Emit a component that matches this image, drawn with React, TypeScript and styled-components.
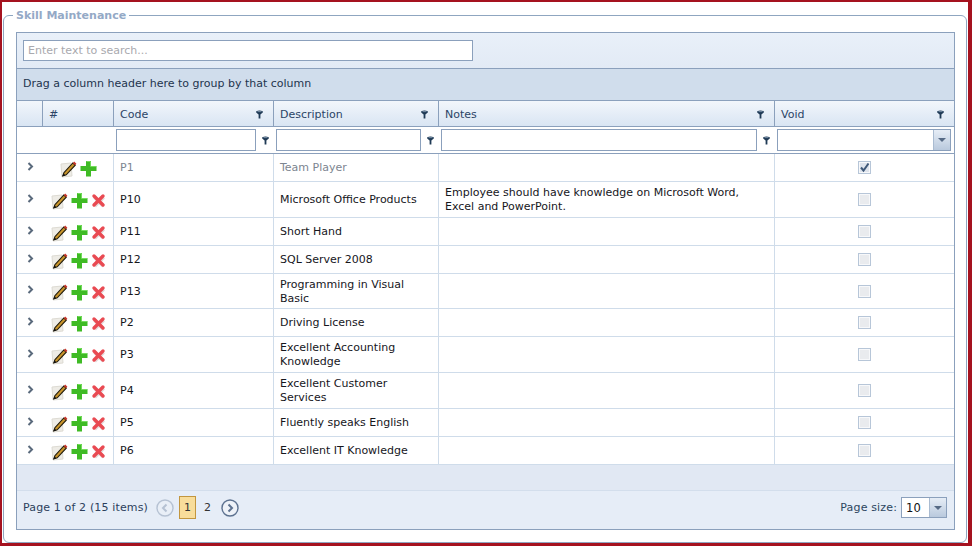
import styled, { createGlobalStyle } from 'styled-components'

const GlobalStyle = createGlobalStyle`
  html, body {
    margin: 0;
    padding: 0;
    background: #fff;
  }
  body {
    font-family: "DejaVu Sans", Verdana, sans-serif;
    font-size: 11px;
    color: #1e1e2a;
  }
`

const Page = styled.div`
  box-sizing: border-box;
  width: 972px;
  height: 546px;
  border-style: solid;
  border-color: #a5121f;
  border-width: 2px 4px 3px 2px;
  padding: 7px 1px 0 1px;
  overflow: hidden;
`

const Fieldset = styled.fieldset`
  box-sizing: border-box;
  height: 534px;
  margin: 0;
  padding: 10px 10px 0 12px;
  border: 1px solid #8fa6c0;
  border-radius: 6px;
  min-width: 0;
`

const Legend = styled.legend`
  margin-left: -3px;
  padding: 0 3px;
  font-weight: bold;
  font-size: 11px;
  line-height: 13px;
  color: #94a9c6;
`

const Grid = styled.div`
  box-sizing: border-box;
  width: 939px;
  height: 498px;
  border: 1px solid #8ba0bc;
  background: #e3ebf5;
  display: flex;
  flex-direction: column;
`

const SearchPanel = styled.div`
  box-sizing: border-box;
  height: 35px;
  padding: 7px 6px;
  background: linear-gradient(#e9f0f9, #e2eaf5);
`

const SearchInput = styled.input`
  box-sizing: border-box;
  display: block;
  width: 450px;
  height: 21px;
  padding: 0 4px;
  border: 1px solid #8ba0bc;
  background: #fff;
  font: inherit;
  &::placeholder {
    color: #a9a9ae;
    opacity: 1;
  }
`

const GroupPanel = styled.div`
  box-sizing: border-box;
  height: 33px;
  padding: 0 6px 2px;
  display: flex;
  align-items: center;
  border-top: 1px solid #8ba0bc;
  border-bottom: 1px solid #8ba0bc;
  background: #d0ddec;
  color: #23344e;
`

const Table = styled.table`
  width: 937px;
  table-layout: fixed;
  border-collapse: separate;
  border-spacing: 0;
  background: #fff;
`

const HeadCell = styled.th`
  box-sizing: border-box;
  height: 26px;
  padding: 1px 6px 0;
  text-align: left;
  font-weight: normal;
  color: #2b4466;
  border-right: 1px solid #8ba0bc;
  border-bottom: 1px solid #8ba0bc;
  background: linear-gradient(#f2f6fb, #d9e5f3);
  &:last-child {
    border-right: 0;
  }
`

const HeadInner = styled.div`
  display: flex;
  align-items: center;
  justify-content: space-between;
  padding-right: 4px;
`

const FilterCell = styled.td`
  box-sizing: border-box;
  height: 27px;
  padding: 0 2px;
  background: #fff;
  border-bottom: 1px solid #8ba0bc;
`

const FilterInner = styled.div`
  display: flex;
  align-items: center;
  justify-content: space-between;
`

const FilterInput = styled.input<{ $w: number }>`
  box-sizing: border-box;
  width: ${p => p.$w}px;
  height: 22px;
  padding: 0 3px;
  border: 1px solid #8ba0bc;
  background: #fff;
  font: inherit;
`

const FilterIcon = styled.span`
  display: flex;
  width: 12px;
  margin-right: 1px;
  justify-content: center;
`

const Combo = styled.div<{ $w: number; $h: number }>`
  box-sizing: border-box;
  width: ${p => p.$w}px;
  height: ${p => p.$h}px;
  display: flex;
  border: 1px solid #8ba0bc;
  background: #fff;
`

const ComboValue = styled.div`
  flex: 1;
  padding-left: 4px;
  display: flex;
  align-items: center;
  color: #111;
  font-size: 11.5px;
`

const ComboButton = styled.div`
  width: 16px;
  display: flex;
  align-items: center;
  justify-content: center;
  border-left: 1px solid #a9bbd1;
  background: linear-gradient(#e6edf6, #b9c9dd);
  &::after {
    content: '';
    border-left: 4px solid transparent;
    border-right: 4px solid transparent;
    border-top: 4px solid #566a85;
  }
`

const Cell = styled.td<{ $muted?: boolean; $center?: boolean }>`
  box-sizing: border-box;
  padding: ${p => (p.$center ? '0 6px' : '1px 6px 0')};
  line-height: 14px;
  vertical-align: middle;
  color: ${p => (p.$muted ? '#7c8590' : '#16161c')};
  text-align: ${p => (p.$center ? 'center' : 'left')};
  border-right: 1px solid #cfdcea;
  border-bottom: 1px solid #cfdcea;
  &:last-child {
    border-right: 0;
  }
`

const ExpandCell = styled.td`
  box-sizing: border-box;
  padding: 0 0 1px 10px;
  border-bottom: 1px solid #cfdcea;
  vertical-align: middle;
`

const ActionCell = styled.td`
  box-sizing: border-box;
  padding: 2px 0 0 0;
  border-right: 1px solid #cfdcea;
  border-bottom: 1px solid #cfdcea;
  vertical-align: middle;
`

const Actions = styled.div<{ $single?: boolean }>`
  display: flex;
  align-items: center;
  gap: 3px;
  padding-left: ${p => (p.$single ? '16px' : '7px')};
`

const Check = styled.span<{ $checked?: boolean }>`
  box-sizing: border-box;
  display: inline-flex;
  align-items: center;
  justify-content: center;
  width: 13px;
  height: 13px;
  vertical-align: middle;
  border: 1px solid #b7c6d8;
  box-shadow: inset 0 0 0 1px #f7f8fa;
  background: ${p => (p.$checked ? '#dfe4ec' : '#e9ebee')};
`

const BlankBand = styled.div`
  box-sizing: border-box;
  height: 26px;
  background: #e1e8f3;
  border-bottom: 1px solid #d3deec;
`

const Pager = styled.div`
  flex: 1;
  display: flex;
  align-items: center;
  justify-content: space-between;
  padding: 0 7px 5px 6px;
  background: #e6edf7;
`

const PagerLeft = styled.div`
  display: flex;
  align-items: center;
  color: #2c3f5c;
`

const Summary = styled.span`
  margin-right: 8px;
  letter-spacing: 0.14px;
`

const NavButton = styled.span<{ $off?: boolean }>`
  display: flex;
  margin: ${p => (p.$off ? '0 4px 0 0' : '0 0 0 3px')};
  opacity: ${p => (p.$off ? 0.4 : 1)};
`

const PageNumber = styled.span<{ $current?: boolean }>`
  box-sizing: border-box;
  width: 17px;
  height: 23px;
  margin: 0 2px 0 1px;
  display: flex;
  align-items: center;
  justify-content: center;
  color: #333;
  border: 1px solid ${p => (p.$current ? '#c2963f' : 'transparent')};
  background: ${p => (p.$current ? '#f8dd9b' : 'transparent')};
`

const PagerRight = styled.div`
  display: flex;
  align-items: center;
  gap: 4px;
  color: #2c4560;
  letter-spacing: 0.15px;
`

const Funnel = () => (
  <svg width="7" height="9" viewBox="0 0 7 9">
    <path d="M0.2 1.2 Q3.5 -0.4 6.8 1.2 L6.8 2.6 L4.4 4.4 L4.4 8.5 L2.6 8.5 L2.6 4.4 L0.2 2.6 Z" fill="#1f3a55" />
    <path d="M1.5 1.6 L5.5 1.6" stroke="#8aa0b8" strokeWidth="0.8" />
  </svg>
)

const Expander = () => (
  <svg width="7" height="9" viewBox="0 0 7 9">
    <path d="M1.5 1 L5 4.5 L1.5 8" fill="none" stroke="#5a6a7c" strokeWidth="2" />
  </svg>
)

const EditIcon = () => (
  <svg width="18" height="18" viewBox="0 0 18 18">
    <path d="M2 4 L12 3 L13 16 L3 17 Z" fill="#eeece6" stroke="#dddbd3" strokeWidth="1" />
    <path d="M5 12.6 L13.8 3 L16.2 5.2 L7.2 14.8 L3.8 15.8 Z" fill="#c9952c" stroke="#241e0e" strokeWidth="1.1" />
    <path d="M3.4 16.2 L4.4 13.4 L6.4 15.2 Z" fill="#111" />
    <path d="M13.8 3 L15.2 1.6 L17.4 3.8 L16.2 5.2 Z" fill="#c8352a" />
  </svg>
)

const AddIcon = () => (
  <svg width="17" height="17" viewBox="0 0 17 17">
    <path d="M6 1 H11 V6 H16.5 V11 H11 V16.5 H6 V11 H0.5 V6 H6 Z" fill="#3fbb25" />
    <path d="M6.5 1.5 H10.5 V6.5 H16" fill="none" stroke="#74dc5c" strokeWidth="1" />
  </svg>
)

const DeleteIcon = () => (
  <svg width="15" height="15" viewBox="0 0 15 15">
    <path d="M3 3.5 L12 12.5 M12 3.5 L3 12.5" stroke="#e4dcdc" strokeWidth="3.8" transform="translate(0.6 0.6)" />
    <path d="M3 3 L12 12 M12 3 L3 12" stroke="#e94a52" strokeWidth="3.4" strokeLinecap="round" />
  </svg>
)

const Tick = () => (
  <svg width="11" height="11" viewBox="0 0 11 11">
    <path d="M2 5.5 L4.5 8.5 L9.5 1.5" fill="none" stroke="#3f5878" strokeWidth="2" />
  </svg>
)

const CircleArrow = ({ back, color }: { back?: boolean; color: string }) => (
  <svg width="18" height="18" viewBox="0 0 18 18">
    <circle cx="9" cy="9" r="8" fill="#eef2f8" stroke={color} strokeWidth="1.4" />
    <path d={back ? 'M10.5 5.5 L7 9 L10.5 12.5' : 'M7.5 5.5 L11 9 L7.5 12.5'} fill="none" stroke={color} strokeWidth="2" />
  </svg>
)

type Row = { code: string; description: string; notes?: string; height: number; first?: boolean }

const rows: Row[] = [
  { code: 'P1', description: 'Team Player', height: 28, first: true },
  {
    code: 'P10',
    description: 'Microsoft Office Products',
    notes: 'Employee should have knowledge on Microsoft Word, Excel and PowerPoint.',
    height: 36,
  },
  { code: 'P11', description: 'Short Hand', height: 28 },
  { code: 'P12', description: 'SQL Server 2008', height: 28 },
  { code: 'P13', description: 'Programming in Visual Basic', height: 35 },
  { code: 'P2', description: 'Driving License', height: 28 },
  { code: 'P3', description: 'Excellent Accounting Knowledge', height: 36 },
  { code: 'P4', description: 'Excellent Customer Services', height: 36 },
  { code: 'P5', description: 'Fluently speaks English', height: 28 },
  { code: 'P6', description: 'Excellent IT Knowledge', height: 28 },
]

const columns = [26, 71, 160, 165, 336, 179]

const App = () => (
  <>
    <GlobalStyle />
    <Page>
      <Fieldset>
        <Legend>Skill Maintenance</Legend>
        <Grid>
          <SearchPanel>
            <SearchInput placeholder="Enter text to search..." readOnly />
          </SearchPanel>
          <GroupPanel>Drag a column header here to group by that column</GroupPanel>
          <Table>
            <colgroup>
              {columns.map((w, i) => (
                <col key={i} style={{ width: w }} />
              ))}
            </colgroup>
            <thead>
              <tr>
                <HeadCell />
                <HeadCell>#</HeadCell>
                {['Code', 'Description', 'Notes', 'Void'].map(title => (
                  <HeadCell key={title}>
                    <HeadInner>
                      {title}
                      <Funnel />
                    </HeadInner>
                  </HeadCell>
                ))}
              </tr>
              <tr>
                <FilterCell />
                <FilterCell />
                {[140, 145, 316].map(w => (
                  <FilterCell key={w}>
                    <FilterInner>
                      <FilterInput $w={w} readOnly />
                      <FilterIcon>
                        <Funnel />
                      </FilterIcon>
                    </FilterInner>
                  </FilterCell>
                ))}
                <FilterCell>
                  <Combo $w={174} $h={22}>
                    <ComboValue />
                    <ComboButton />
                  </Combo>
                </FilterCell>
              </tr>
            </thead>
            <tbody>
              {rows.map(row => (
                <tr key={row.code} style={{ height: row.height }}>
                  <ExpandCell>
                    <Expander />
                  </ExpandCell>
                  <ActionCell>
                    <Actions $single={row.first}>
                      <EditIcon />
                      <AddIcon />
                      {!row.first && <DeleteIcon />}
                    </Actions>
                  </ActionCell>
                  <Cell $muted={row.first}>{row.code}</Cell>
                  <Cell $muted={row.first}>{row.description}</Cell>
                  <Cell>{row.notes}</Cell>
                  <Cell $center>
                    <Check $checked={row.first}>{row.first && <Tick />}</Check>
                  </Cell>
                </tr>
              ))}
            </tbody>
          </Table>
          <BlankBand />
          <Pager>
            <PagerLeft>
              <Summary>Page 1 of 2 (15 items)</Summary>
              <NavButton $off>
                <CircleArrow back color="#6f84a0" />
              </NavButton>
              <PageNumber $current>1</PageNumber>
              <PageNumber>2</PageNumber>
              <NavButton>
                <CircleArrow color="#5d7290" />
              </NavButton>
            </PagerLeft>
            <PagerRight>
              Page size:
              <Combo $w={46} $h={21}>
                <ComboValue>10</ComboValue>
                <ComboButton />
              </Combo>
            </PagerRight>
          </Pager>
        </Grid>
      </Fieldset>
    </Page>
  </>
)

export default App
